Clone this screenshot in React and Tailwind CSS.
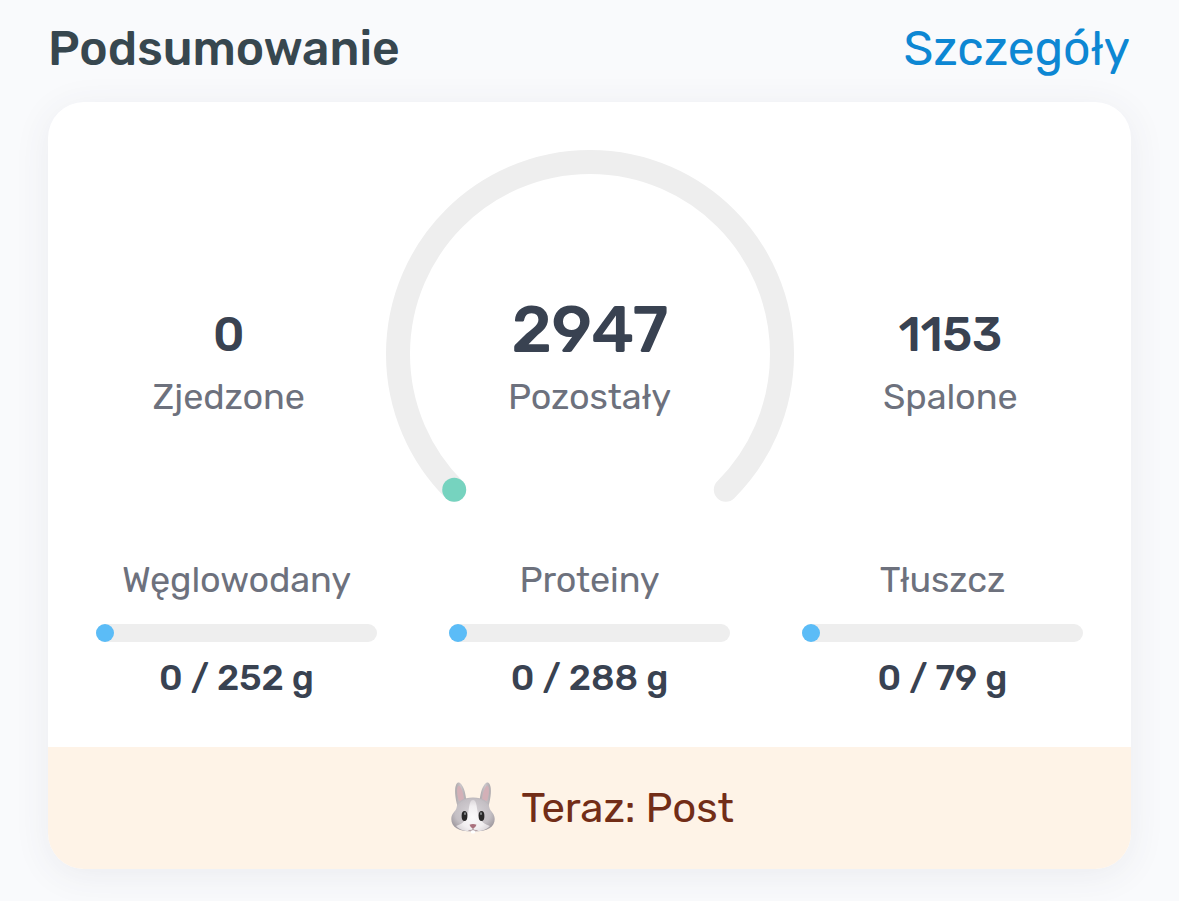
const STATS = {
  eaten: { value: '0', label: 'Zjedzone' },
  left: { value: '2947', label: 'Pozostały' },
  burned: { value: '1153', label: 'Spalone' },
}

const MACROS = [
  { name: 'Węglowodany', amount: '0 / 252 g' },
  { name: 'Proteiny', amount: '0 / 288 g' },
  { name: 'Tłuszcz', amount: '0 / 79 g' },
]

function SideStat({ value, label }) {
  return (
    <div className="flex flex-1 flex-col items-center pt-[160px]">
      <span className="text-[48px] leading-[50px] font-medium tracking-[-0.2px] text-[#394251]">{value}</span>
      <span className="mt-[16px] text-[36px] leading-[42px] tracking-[-0.1px] text-[#6d717d]">{label}</span>
    </div>
  )
}

function CalorieRing({ value, label }) {
  return (
    <div className="grid h-[408px] w-[408px]">
      <svg className="col-start-1 row-start-1" width="408" height="408" viewBox="0 0 408 408" fill="none">
        <path
          d="M68.2 339.8A192 192 0 1 1 339.8 339.8"
          stroke="#eeeeee"
          strokeWidth="24"
          strokeLinecap="round"
        />
        <circle cx="68.2" cy="339.8" r="12" fill="#76d3bf" />
      </svg>
      <div className="col-start-1 row-start-1 flex flex-col items-center pt-[144px]">
        <span className="text-[66px] leading-[72px] font-medium tracking-[-0.4px] text-[#394251]">{value}</span>
        <span className="mt-[10px] text-[36px] leading-[42px] tracking-[-0.15px] text-[#6d717d]">{label}</span>
      </div>
    </div>
  )
}

function Macro({ name, amount }) {
  return (
    <div className="flex flex-1 flex-col items-center">
      <span className="text-[36px] leading-[42px] tracking-[-0.1px] text-[#6d717d]">{name}</span>
      <div className="mt-[23px] h-[18px] w-full rounded-full bg-[#eeeeee]">
        <div className="h-[18px] w-[18px] rounded-full bg-[#5bbcf7]" />
      </div>
      <span className="mt-[15px] text-[36px] leading-[42px] font-medium tracking-[-0.1px] text-[#394251]">{amount}</span>
    </div>
  )
}

function Rabbit() {
  return (
    <svg width="48" height="54" viewBox="0 0 48 54">
      <defs>
        <radialGradient id="fur" cx="50%" cy="45%" r="58%">
          <stop offset="0" stopColor="#d8d4d8" />
          <stop offset="0.7" stopColor="#c4bfc4" />
          <stop offset="1" stopColor="#a09aa0" />
        </radialGradient>
        <linearGradient id="ear" x1="0" x2="1">
          <stop offset="0" stopColor="#aba6aa" />
          <stop offset="0.5" stopColor="#cbc6ca" />
          <stop offset="1" stopColor="#aca7ab" />
        </linearGradient>
        <radialGradient id="blaze" cx="50%" cy="55%" r="60%">
          <stop offset="0" stopColor="#fbfafb" />
          <stop offset="0.6" stopColor="#f1eef0" />
          <stop offset="1" stopColor="#d6d1d5" />
        </radialGradient>
      </defs>
      <path d="M8.500 25C6 17 5.300 7 7.300 3.300C8.500 1 10.500 1 12.300 3.300C15.500 7.500 17 14 17.300 21Z" fill="url(#ear)" />
      <path d="M39.500 25C42 17 42.700 7 40.700 3.300C39.500 1 37.500 1 35.700 3.300C32.500 7.500 31 14 30.700 21Z" fill="url(#ear)" />
      <path d="M10 20C7.700 13 7.500 7.500 9 5.300C10 4.300 11 5 12 7C14 11 14.700 15 14.800 19Z" fill="#d3b0b7" />
      <path d="M38 20C40.300 13 40.500 7.500 39 5.300C38 4.300 37 5 36 7C34 11 33.300 15 33.200 19Z" fill="#d3b0b7" />
      <path
        d="M24 16.500C14 16.500 8.500 20 7.500 27C7 30 2.300 32 2.300 38C2.300 46 9 50.500 24 50.500S45.700 46 45.700 38C45.700 32 41 30 40.500 27C39.500 20 34 16.500 24 16.500Z"
        fill="url(#fur)"
      />
      <path
        d="M24 19C20.500 19 20.500 25 19.500 30C18.700 37 16 42 7 45C11 49.500 18 50.500 24 50.500S37 49.500 41 45C32 42 29.300 37 28.500 30C27.500 25 27.500 19 24 19Z"
        fill="url(#blaze)"
      />
      <ellipse cx="15.500" cy="35" rx="2.900" ry="5" fill="#292829" />
      <ellipse cx="32.500" cy="35" rx="2.900" ry="5" fill="#292829" />
      <ellipse cx="16" cy="32.700" rx="1" ry="1.400" fill="#85888b" />
      <ellipse cx="32" cy="32.700" rx="1" ry="1.400" fill="#85888b" />
      <path d="M20.500 43.700Q24 42.500 27.500 43.700Q26.500 46.700 24 47.700Q21.500 46.700 20.500 43.700Z" fill="#a9707d" />
      <path d="M22 49.300H26V52Q24 53 22 52Z" fill="#ffffff" />
      <path d="M24 47V48.700M19.500 49.500Q22.500 49.800 24 48.500Q25.500 49.800 28.500 49.500" stroke="#a58f94" strokeWidth="0.800" fill="none" />
    </svg>
  )
}

export default function App() {
  return (
    <div className="h-[901px] overflow-hidden bg-[#f9fafc] px-[48px] font-['Rubik','Roboto',sans-serif]">
      <header className="flex h-[102px] items-start justify-between pt-[21px] text-[48px] leading-[56px]">
        <h1 className="font-medium text-[#37474f]">Podsumowanie</h1>
        <a className="pr-px tracking-[-0.1px] text-[#0d87d3]">Szczegóły</a>
      </header>

      <section className="flex h-[767px] flex-col overflow-hidden rounded-[36px] bg-white shadow-[0_6px_36px_rgba(60,70,90,0.08)]">
        <div className="flex px-[24px] pt-[48px]">
          <SideStat {...STATS.eaten} />
          <CalorieRing {...STATS.left} />
          <SideStat {...STATS.burned} />
        </div>

        <div className="mt-px flex gap-[72px] px-[48px]">
          {MACROS.map((m) => (
            <Macro key={m.name} {...m} />
          ))}
        </div>

        <div className="mt-auto flex h-[122px] items-center justify-center gap-[24px] bg-[#fef3e7] pl-[4px]">
          <Rabbit />
          <span className="text-[42px] leading-[50px] tracking-[-0.1px] text-[#722d17]">Teraz: Post</span>
        </div>
      </section>
    </div>
  )
}
